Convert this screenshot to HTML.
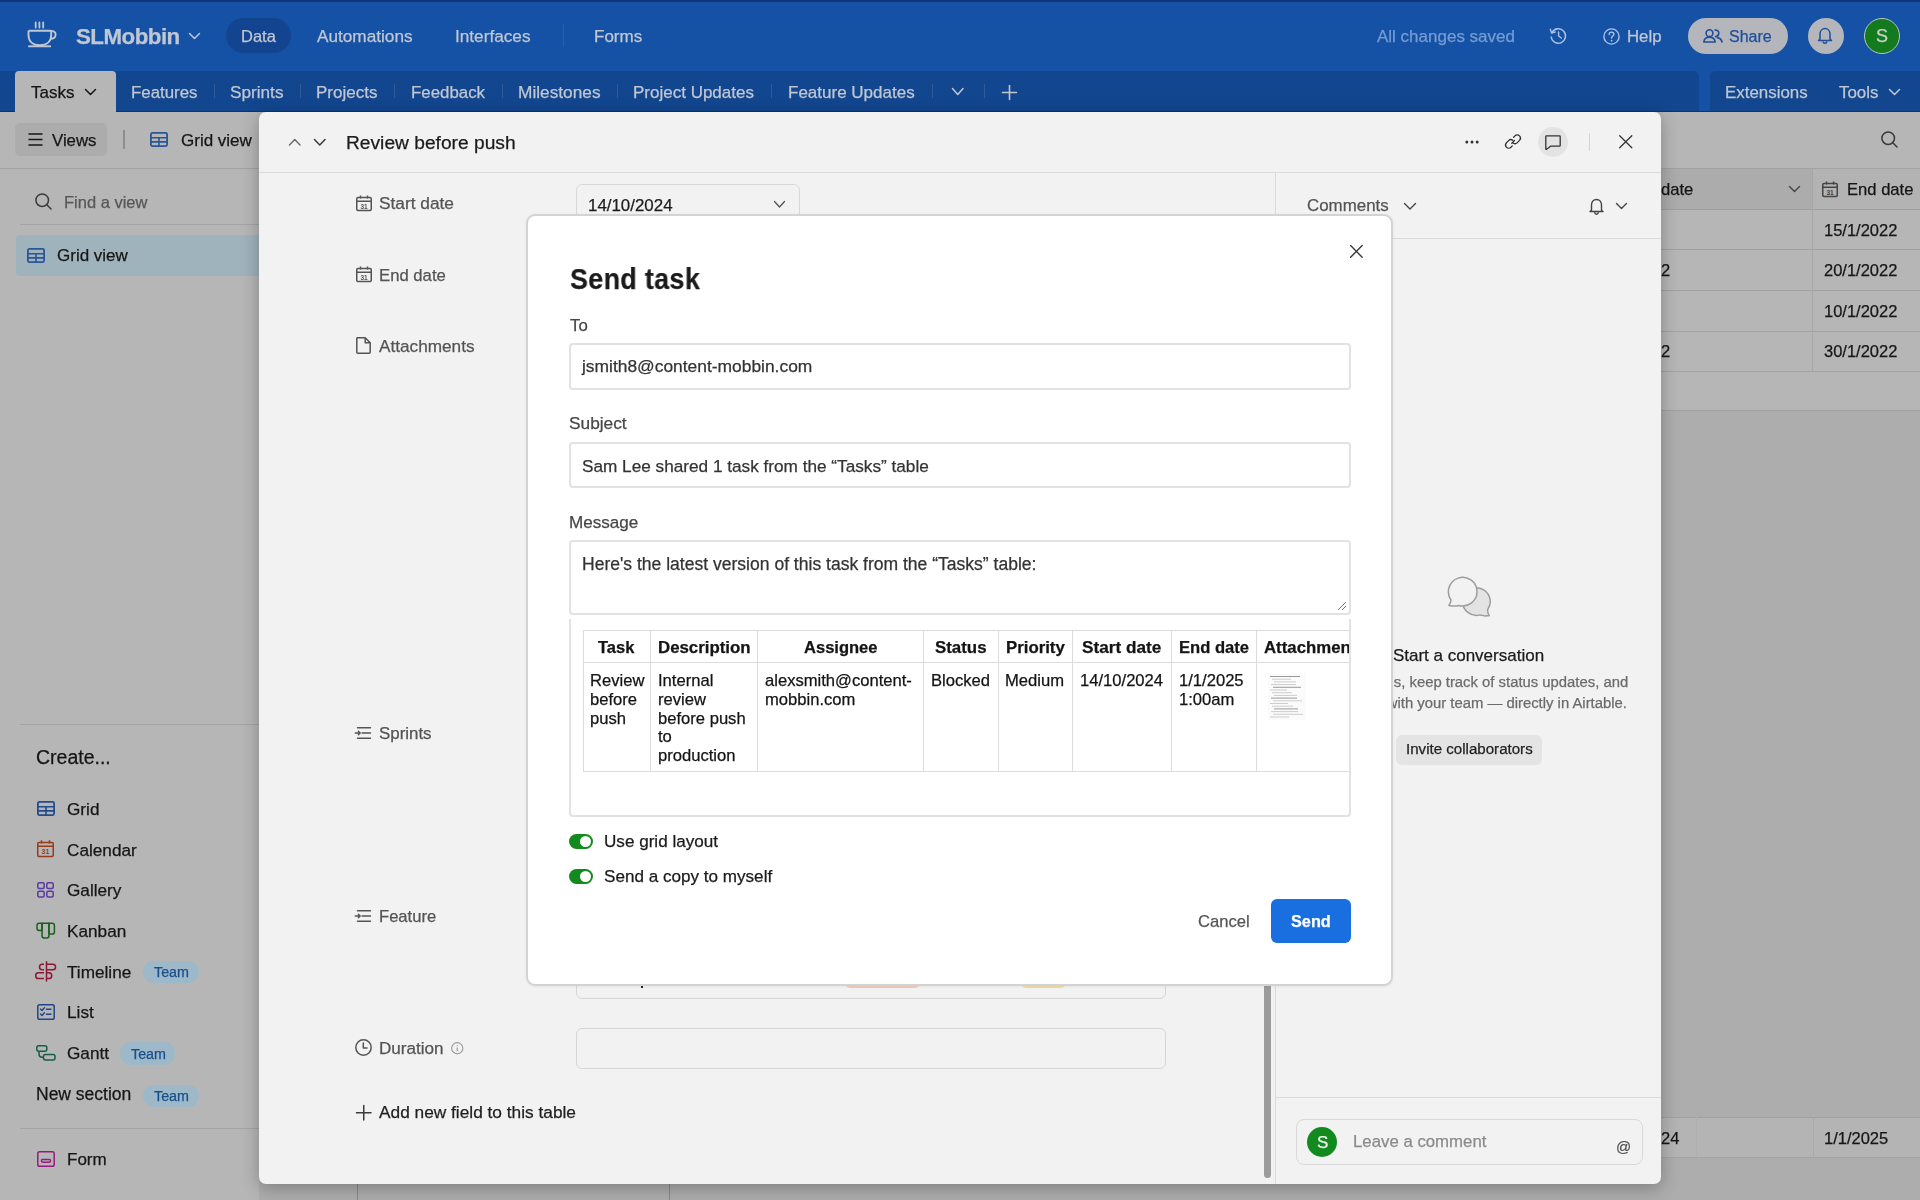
<!DOCTYPE html>
<html><head><meta charset="utf-8"><title>Send task</title>
<style>
html,body{margin:0;padding:0;width:1920px;height:1200px;overflow:hidden;position:relative;font-family:"Liberation Sans", sans-serif;background:#b6b6b6}
.t{position:absolute;white-space:nowrap;font-family:"Liberation Sans", sans-serif;-webkit-text-stroke:0.25px currentColor;will-change:transform}
svg{overflow:visible}
</style></head><body>
<div style="position:absolute;left:0px;top:0px;width:1920px;height:112px;background:#1552a6"></div>
<div style="position:absolute;left:0px;top:0px;width:1920px;height:2px;background:#0f357a"></div>
<svg style="position:absolute;left:22px;top:15px;" width="40" height="40" viewBox="0 0 40 40" fill="none"><path d="M6.5 15.7 H29.2 M6.5 15.7 V20 C6.5 26.5 11 30.3 17.8 30.3 C24.6 30.3 29.2 26.5 29.2 20 V15.7" stroke="#c0c7d3" stroke-width="1.9" stroke-linejoin="round"/><path d="M28.8 15.9 C32.6 15.9 33.6 17.5 33.6 19.6 C33.6 22 31.8 23.9 28 24" stroke="#c0c7d3" stroke-width="1.9"/><path d="M6.2 31.3 H29" stroke="#c0c7d3" stroke-width="1.9"/><path d="M13.7 7.4 V12.5 M17.4 7.4 V12.5 M21.2 7.4 V12.5" stroke="#c0c7d3" stroke-width="1.8" stroke-linecap="round"/></svg>
<div class="t" style="left:76.00px;top:22.70px;font-size:22.3px;line-height:28px;font-weight:700;color:#c0c7d3;letter-spacing:-0.5px">SLMobbin</div>
<svg style="position:absolute;left:189px;top:33px;" width="11" height="6" viewBox="0 0 11 6" fill="none"><path d="M0.5 0.5 L5.5 5.5 L10.5 0.5" stroke="#c0c7d3" stroke-width="1.5" stroke-linecap="round" stroke-linejoin="round"/></svg>
<div style="position:absolute;left:226px;top:18px;width:65px;height:35px;background:#13448f;border-radius:18px"></div>
<div class="t" style="left:241.00px;top:25.70px;font-size:16.5px;line-height:21px;font-weight:400;color:#c0c7d3;">Data</div>
<div class="t" style="left:317.00px;top:24.70px;font-size:17.2px;line-height:22px;font-weight:400;color:#c0c7d3;">Automations</div>
<div class="t" style="left:454.60px;top:24.70px;font-size:17.2px;line-height:22px;font-weight:400;color:#c0c7d3;">Interfaces</div>
<div style="position:absolute;left:563px;top:24px;width:1px;height:23px;background:#2d5ea6"></div>
<div class="t" style="left:594.00px;top:25.70px;font-size:17px;line-height:21px;font-weight:400;color:#c0c7d3;">Forms</div>
<div class="t" style="left:1376.60px;top:25.70px;font-size:17px;line-height:21px;font-weight:400;color:#769cd3;">All changes saved</div>
<svg style="position:absolute;left:1549px;top:27px;" width="18" height="17" viewBox="0 0 18 17" fill="none"><path d="M3.2 5.2 A7.2 7.2 0 1 1 2.2 10" stroke="#adc3e6" stroke-width="1.4" stroke-linecap="round"/><path d="M1.3 2.3 L2.6 6 L6.2 5" stroke="#adc3e6" stroke-width="1.4" stroke-linecap="round" stroke-linejoin="round"/><path d="M9.6 5 V9 L12.3 11" stroke="#adc3e6" stroke-width="1.4" stroke-linecap="round" stroke-linejoin="round"/></svg>
<svg style="position:absolute;left:1603px;top:28px;" width="17" height="17" viewBox="0 0 17 17" fill="none"><circle cx="8.5" cy="8.5" r="7.6" stroke="#adc3e6" stroke-width="1.4"/><path d="M6.2 6.5 C6.2 4.8 7.3 4.1 8.5 4.1 C9.8 4.1 10.9 5 10.9 6.3 C10.9 7.9 8.6 8.2 8.6 10" stroke="#adc3e6" stroke-width="1.4" stroke-linecap="round"/><circle cx="8.6" cy="12.7" r="0.9" fill="#adc3e6"/></svg>
<div class="t" style="left:1627.00px;top:25.70px;font-size:16.8px;line-height:21px;font-weight:400;color:#c0c7d3;">Help</div>
<div style="position:absolute;left:1687.5px;top:17.5px;width:100.5px;height:36px;background:#b4b6bb;border-radius:18px"></div>
<svg style="position:absolute;left:1703px;top:29px;" width="20" height="14" viewBox="0 0 20 14" fill="none"><circle cx="6.5" cy="4.2" r="3.4" stroke="#1f4e98" stroke-width="1.6"/><path d="M0.8 13 C1.2 9.8 3.5 8.3 6.5 8.3 C9.5 8.3 11.8 9.8 12.2 13 Z" stroke="#1f4e98" stroke-width="1.6" stroke-linejoin="round"/><path d="M12 1 C14.5 1 15.8 2.6 15.8 4.3 C15.8 6 14.6 7.4 12.6 7.6 M14.5 8.6 C17 9.2 18.6 10.6 19 13" stroke="#1f4e98" stroke-width="1.6" stroke-linecap="round"/></svg>
<div class="t" style="left:1729.00px;top:26.70px;font-size:16px;line-height:20px;font-weight:400;color:#1d4f9c;">Share</div>
<div style="position:absolute;left:1807.5px;top:17.5px;width:36px;height:36px;background:#b4b6bb;border-radius:50%"></div>
<svg style="position:absolute;left:1817px;top:27px;" width="16" height="17" viewBox="0 0 16 17" fill="none"><path d="M3 12 V7.2 C3 4 5.2 1.6 8 1.6 C10.8 1.6 13 4 13 7.2 V12 L14.5 13.5 H1.5 Z" stroke="#1f4e98" stroke-width="1.5" stroke-linejoin="round"/><path d="M6 14.5 C6.3 15.7 7 16.3 8 16.3 C9 16.3 9.7 15.7 10 14.5" stroke="#1f4e98" stroke-width="1.5"/></svg>
<div style="position:absolute;left:1864px;top:17.5px;width:36px;height:36px;background:#137a1e;border-radius:50%;box-sizing:border-box;border:1.5px solid #b8c4b8"></div>
<div class="t" style="left:1875.50px;top:24.80px;font-size:18px;line-height:22px;font-weight:400;color:#c9d3c9;">S</div>
<div style="position:absolute;left:0px;top:71px;width:1699px;height:41px;background:#12468f;border-top-right-radius:6px"></div>
<div style="position:absolute;left:1710px;top:71px;width:210px;height:41px;background:#12468f;border-top-left-radius:5px"></div>
<div style="position:absolute;left:0px;top:110.5px;width:1920px;height:1.5px;background:#0c3478"></div>
<div style="position:absolute;left:15px;top:71px;width:101px;height:41px;background:#b6b6b6;border-radius:4px 4px 0 0"></div>
<div class="t" style="left:31.30px;top:81.50px;font-size:17px;line-height:21px;font-weight:400;color:#161616;">Tasks</div>
<svg style="position:absolute;left:85px;top:88.5px;" width="11" height="6" viewBox="0 0 11 6" fill="none"><path d="M0.5 0.5 L5.5 5.5 L10.5 0.5" stroke="#161616" stroke-width="1.5" stroke-linecap="round" stroke-linejoin="round"/></svg>
<div class="t" style="left:131.00px;top:81.50px;font-size:16.85px;line-height:21px;font-weight:400;color:#c0c7d3;">Features</div>
<div class="t" style="left:230.00px;top:80.50px;font-size:17.2px;line-height:22px;font-weight:400;color:#c0c7d3;">Sprints</div>
<div class="t" style="left:316.40px;top:81.50px;font-size:17px;line-height:21px;font-weight:400;color:#c0c7d3;">Projects</div>
<div class="t" style="left:410.70px;top:81.50px;font-size:16.85px;line-height:21px;font-weight:400;color:#c0c7d3;">Feedback</div>
<div class="t" style="left:517.70px;top:80.50px;font-size:17.27px;line-height:22px;font-weight:400;color:#c0c7d3;">Milestones</div>
<div class="t" style="left:633.00px;top:81.50px;font-size:17px;line-height:21px;font-weight:400;color:#c0c7d3;">Project Updates</div>
<div class="t" style="left:787.80px;top:81.50px;font-size:17px;line-height:21px;font-weight:400;color:#c0c7d3;">Feature Updates</div>
<div style="position:absolute;left:214px;top:84px;width:1px;height:14px;background:#2f5a9c"></div>
<div style="position:absolute;left:299.6px;top:84px;width:1px;height:14px;background:#2f5a9c"></div>
<div style="position:absolute;left:394.4px;top:84px;width:1px;height:14px;background:#2f5a9c"></div>
<div style="position:absolute;left:502px;top:84px;width:1px;height:14px;background:#2f5a9c"></div>
<div style="position:absolute;left:616.6px;top:84px;width:1px;height:14px;background:#2f5a9c"></div>
<div style="position:absolute;left:771.4px;top:84px;width:1px;height:14px;background:#2f5a9c"></div>
<div style="position:absolute;left:931.8px;top:84px;width:1px;height:14px;background:#2f5a9c"></div>
<div style="position:absolute;left:983.6px;top:84px;width:1px;height:14px;background:#2f5a9c"></div>
<svg style="position:absolute;left:952px;top:88px;" width="11.5" height="7" viewBox="0 0 11.5 7" fill="none"><path d="M0.5 0.5 L5.75 6.5 L11.0 0.5" stroke="#c0c7d3" stroke-width="1.5" stroke-linecap="round" stroke-linejoin="round"/></svg>
<svg style="position:absolute;left:1002px;top:85px;" width="15" height="15" viewBox="0 0 15 15" fill="none"><path d="M7.5 0.5 V14.5 M0.5 7.5 H14.5" stroke="#c0c7d3" stroke-width="1.6" stroke-linecap="round"/></svg>
<div class="t" style="left:1725.00px;top:81.50px;font-size:16.9px;line-height:21px;font-weight:400;color:#c0c7d3;">Extensions</div>
<div class="t" style="left:1839.00px;top:81.50px;font-size:16.9px;line-height:21px;font-weight:400;color:#c0c7d3;">Tools</div>
<svg style="position:absolute;left:1889px;top:88.5px;" width="11" height="6" viewBox="0 0 11 6" fill="none"><path d="M0.5 0.5 L5.5 5.5 L10.5 0.5" stroke="#c0c7d3" stroke-width="1.5" stroke-linecap="round" stroke-linejoin="round"/></svg>
<div style="position:absolute;left:0px;top:112px;width:1920px;height:57px;background:#b6b6b6"></div>
<div style="position:absolute;left:0px;top:168px;width:1920px;height:1px;background:#a2a2a2"></div>
<div style="position:absolute;left:15px;top:123px;width:92px;height:33px;background:#acacac;border-radius:5px"></div>
<svg style="position:absolute;left:28px;top:133px;" width="15" height="13" viewBox="0 0 15 13" fill="none"><path d="M0.5 1 H14.5 M0.5 6.5 H14.5 M0.5 12 H14.5" stroke="#161616" stroke-width="1.6"/></svg>
<div class="t" style="left:51.70px;top:130.00px;font-size:16.8px;line-height:21px;font-weight:400;color:#161616;">Views</div>
<div style="position:absolute;left:123px;top:130px;width:1.5px;height:19px;background:#8e8e8e"></div>
<svg style="position:absolute;left:150px;top:132px;" width="18" height="15" viewBox="0 0 18 15" fill="none"><rect x="0.9" y="0.9" width="16.2" height="13.2" rx="1.5" stroke="#2a5599" stroke-width="1.8"/><path d="M0.9 5.7 H17.1 M0.9 9.9 H17.1 M9.0 5.7 V14.1" stroke="#2a5599" stroke-width="1.6"/></svg>
<div class="t" style="left:180.50px;top:130.00px;font-size:17px;line-height:21px;font-weight:400;color:#161616;">Grid view</div>
<svg style="position:absolute;left:1881px;top:131px;" width="17" height="17" viewBox="0 0 17 17" fill="none"><circle cx="7.2" cy="7.2" r="6.3" stroke="#3a3a3a" stroke-width="1.5"/><path d="M11.8 11.8 L16 16" stroke="#3a3a3a" stroke-width="1.5" stroke-linecap="round"/></svg>
<div style="position:absolute;left:0px;top:169px;width:259px;height:1031px;background:#b6b6b6"></div>
<svg style="position:absolute;left:35px;top:193px;" width="17" height="17" viewBox="0 0 17 17" fill="none"><circle cx="7.2" cy="7.2" r="6.3" stroke="#3c3c3c" stroke-width="1.5"/><path d="M11.8 11.8 L16 16" stroke="#3c3c3c" stroke-width="1.5" stroke-linecap="round"/></svg>
<div class="t" style="left:64.30px;top:191.70px;font-size:16.5px;line-height:21px;font-weight:400;color:#575757;">Find a view</div>
<div style="position:absolute;left:20px;top:224px;width:280px;height:1px;background:#a4a4a4"></div>
<div style="position:absolute;left:16px;top:235px;width:284px;height:41px;background:#9fb3bc;border-radius:4px"></div>
<svg style="position:absolute;left:26.5px;top:247.5px;" width="18" height="15" viewBox="0 0 18 15" fill="none"><rect x="0.9" y="0.9" width="16.2" height="13.2" rx="1.5" stroke="#2a5599" stroke-width="1.8"/><path d="M0.9 5.7 H17.1 M0.9 9.9 H17.1 M9.0 5.7 V14.1" stroke="#2a5599" stroke-width="1.6"/></svg>
<div class="t" style="left:56.60px;top:245.40px;font-size:17px;line-height:21px;font-weight:400;color:#161616;">Grid view</div>
<div style="position:absolute;left:20px;top:724px;width:280px;height:1px;background:#a4a4a4"></div>
<div class="t" style="left:35.75px;top:744.50px;font-size:19.5px;line-height:24px;font-weight:400;color:#161616;">Create...</div>
<div class="t" style="left:66.50px;top:798.00px;font-size:17.2px;line-height:22px;font-weight:400;color:#161616;">Grid</div>
<div class="t" style="left:66.50px;top:839.30px;font-size:17.2px;line-height:22px;font-weight:400;color:#161616;">Calendar</div>
<div class="t" style="left:66.50px;top:879.40px;font-size:17.2px;line-height:22px;font-weight:400;color:#161616;">Gallery</div>
<div class="t" style="left:66.50px;top:920.00px;font-size:17.2px;line-height:22px;font-weight:400;color:#161616;">Kanban</div>
<div class="t" style="left:66.50px;top:960.90px;font-size:17.2px;line-height:22px;font-weight:400;color:#161616;">Timeline</div>
<div class="t" style="left:66.50px;top:1001.00px;font-size:17.2px;line-height:22px;font-weight:400;color:#161616;">List</div>
<div class="t" style="left:66.50px;top:1041.70px;font-size:17.2px;line-height:22px;font-weight:400;color:#161616;">Gantt</div>
<svg style="position:absolute;left:36.5px;top:801px;" width="18" height="15" viewBox="0 0 18 15" fill="none"><rect x="0.9" y="0.9" width="16.2" height="13.2" rx="1.5" stroke="#224c8c" stroke-width="1.8"/><path d="M0.9 5.7 H17.1 M0.9 9.9 H17.1 M9.0 5.7 V14.1" stroke="#224c8c" stroke-width="1.6"/></svg>
<svg style="position:absolute;left:37px;top:840px;" width="17" height="17" viewBox="0 0 17 17" fill="none"><rect x="0.75" y="2.5" width="15.5" height="14" rx="1.2" stroke="#963c17" stroke-width="1.5"/><path d="M0.75 6.3 H16.25 M4.5 0.3 V3.5 M12.5 0.3 V3.5" stroke="#963c17" stroke-width="1.5"/><text x="8.5" y="14.3" font-size="7" font-family="Liberation Sans" font-weight="700" text-anchor="middle" fill="#963c17">31</text></svg>
<svg style="position:absolute;left:37px;top:882px;" width="17" height="16" viewBox="0 0 17 16" fill="none"><rect x="0.8" y="0.8" width="6.4" height="5.8" rx="1.5" stroke="#5a3a9e" stroke-width="1.5"/><rect x="9.8" y="0.8" width="6.4" height="5.8" rx="1.5" stroke="#5a3a9e" stroke-width="1.5"/><rect x="0.8" y="9.2" width="6.4" height="5.8" rx="1.5" stroke="#5a3a9e" stroke-width="1.5"/><rect x="9.8" y="9.2" width="6.4" height="5.8" rx="1.5" stroke="#5a3a9e" stroke-width="1.5"/></svg>
<svg style="position:absolute;left:32px;top:918px;" width="28" height="28" viewBox="0 0 28 28" fill="none"><path d="M10 5.3 H7.2 C5.9 5.3 5 6.2 5 7.5 V10.3 C5 11.6 5.9 12.4 7.2 12.4 H10 Z" stroke="#17601d" stroke-width="1.5" stroke-linejoin="round"/><path d="M10 5.3 H17 V17.8 C17 19.1 16.1 20 14.8 20 H12.2 C10.9 20 10 19.1 10 17.8 Z" stroke="#17601d" stroke-width="1.5" stroke-linejoin="round"/><path d="M17 5.3 H20.2 C21.5 5.3 22.4 6.2 22.4 7.5 V13.9 C22.4 15.2 21.5 16.1 20.2 16.1 H17 Z" stroke="#17601d" stroke-width="1.5" stroke-linejoin="round"/></svg>
<svg style="position:absolute;left:32px;top:958px;" width="28" height="28" viewBox="0 0 28 28" fill="none"><path d="M14.5 3.7 V22.9" stroke="#8e1638" stroke-width="1.5" stroke-linecap="round"/><path d="M14.5 6.2 H20.9 C22.4 6.2 23.6 7.4 23.6 8.95 C23.6 10.5 22.4 11.7 20.9 11.7 H14.5 M12 6.2 H10.2 C8.7 6.2 7.5 7.4 7.5 8.95 C7.5 10.5 8.7 11.7 10.2 11.7 H12" stroke="#8e1638" stroke-width="1.5"/><path d="M14.5 14.8 H17 C18.5 14.8 19.7 16 19.7 17.65 C19.7 19.3 18.5 20.5 17 20.5 H14.5 M12 14.8 H6.4 C4.9 14.8 3.7 16 3.7 17.65 C3.7 19.3 4.9 20.5 6.4 20.5 H12" stroke="#8e1638" stroke-width="1.5"/></svg>
<svg style="position:absolute;left:36.5px;top:1004px;" width="18" height="16" viewBox="0 0 18 16" fill="none"><rect x="0.8" y="0.8" width="16.4" height="14.4" rx="1.8" stroke="#224587" stroke-width="1.5"/><path d="M3.5 5 L5 6.5 L7.5 3.8 M3.5 10 L5 11.5 L7.5 8.8 M9.5 5.3 H14 M9.5 10.3 H14" stroke="#224587" stroke-width="1.4" stroke-linecap="round" stroke-linejoin="round"/></svg>
<svg style="position:absolute;left:35.5px;top:1045px;" width="20" height="16" viewBox="0 0 20 16" fill="none"><rect x="0.8" y="0.8" width="10" height="5.5" rx="2" stroke="#165e45" stroke-width="1.5"/><rect x="7.5" y="9.5" width="11.5" height="5.5" rx="2" stroke="#165e45" stroke-width="1.5"/><path d="M3 6.3 V9 C3 11 4 12.2 6 12.2 H7.5" stroke="#165e45" stroke-width="1.5"/></svg>
<div style="position:absolute;left:143px;top:961px;width:56px;height:22.3px;background:#9db8c9;border-radius:11px"></div>
<div class="t" style="left:153.80px;top:963.30px;font-size:14.3px;line-height:18px;font-weight:400;color:#194f8a;">Team</div>
<div style="position:absolute;left:120.3px;top:1042.3px;width:55.2px;height:22.3px;background:#9db8c9;border-radius:11px"></div>
<div class="t" style="left:131.10px;top:1044.60px;font-size:14.3px;line-height:18px;font-weight:400;color:#194f8a;">Team</div>
<div class="t" style="left:36.40px;top:1083.00px;font-size:17.5px;line-height:22px;font-weight:400;color:#161616;">New section</div>
<div style="position:absolute;left:143px;top:1084.7px;width:56px;height:22.3px;background:#9db8c9;border-radius:11px"></div>
<div class="t" style="left:153.80px;top:1087.00px;font-size:14.3px;line-height:18px;font-weight:400;color:#194f8a;">Team</div>
<div style="position:absolute;left:20px;top:1128px;width:280px;height:1px;background:#a4a4a4"></div>
<svg style="position:absolute;left:36.5px;top:1151px;" width="18" height="16" viewBox="0 0 18 16" fill="none"><rect x="0.8" y="0.8" width="16.4" height="14.4" rx="1.8" stroke="#961b80" stroke-width="1.5"/><path d="M4.5 8.5 V9.5 C4.5 10.6 5.2 11.3 6.3 11.3 H12.2 C13.2 11.3 13.6 10.6 13.6 9.8 C13.6 9 13.2 8.5 12.2 8.5 H4.5" stroke="#961b80" stroke-width="1.4"/></svg>
<div class="t" style="left:66.50px;top:1149.40px;font-size:17px;line-height:21px;font-weight:400;color:#161616;">Form</div>
<div style="position:absolute;left:259px;top:169px;width:1661px;height:1031px;background:#adadad"></div>
<div style="position:absolute;left:300px;top:169px;width:1620px;height:40px;background:#b3b3b3"></div>
<div style="position:absolute;left:1661px;top:169px;width:151px;height:40px;background:#acacac"></div>
<div style="position:absolute;left:300px;top:208.5px;width:1620px;height:1px;background:#9e9e9e"></div>
<div style="position:absolute;left:300px;top:209.5px;width:1620px;height:200.5px;background:#b6b6b6"></div>
<div style="position:absolute;left:300px;top:249px;width:1620px;height:1px;background:#a1a1a1"></div>
<div style="position:absolute;left:300px;top:290px;width:1620px;height:1px;background:#a1a1a1"></div>
<div style="position:absolute;left:300px;top:331px;width:1620px;height:1px;background:#a1a1a1"></div>
<div style="position:absolute;left:300px;top:371px;width:1620px;height:1px;background:#a1a1a1"></div>
<div style="position:absolute;left:300px;top:410px;width:1620px;height:1px;background:#a1a1a1"></div>
<div style="position:absolute;left:1812px;top:169px;width:1px;height:202px;background:#a6a6a6"></div>
<div class="t" style="left:1661.00px;top:178.50px;font-size:16.6px;line-height:21px;font-weight:400;color:#161616;clip-path:inset(0 0 0 0)">date</div>
<svg style="position:absolute;left:1789px;top:186px;" width="11" height="6" viewBox="0 0 11 6" fill="none"><path d="M0.5 0.5 L5.5 5.5 L10.5 0.5" stroke="#4a4a4a" stroke-width="1.5" stroke-linecap="round" stroke-linejoin="round"/></svg>
<svg style="position:absolute;left:1822px;top:181px;" width="16" height="16" viewBox="0 0 16 16" fill="none"><rect x="0.75" y="2.5" width="14.5" height="13" rx="1.2" stroke="#444" stroke-width="1.5"/><path d="M0.75 6.2 H15.25 M4.5 0.5 V3.5 M11.5 0.5 V3.5" stroke="#444" stroke-width="1.5"/><text x="8" y="13.6" font-size="6.5" font-family="Liberation Sans" font-weight="700" text-anchor="middle" fill="#444">31</text></svg>
<div class="t" style="left:1847.00px;top:178.50px;font-size:16.6px;line-height:21px;font-weight:400;color:#161616;">End date</div>
<div class="t" style="left:1824.00px;top:219.60px;font-size:16.5px;line-height:21px;font-weight:400;color:#161616;">15/1/2022</div>
<div class="t" style="left:1824.00px;top:260.20px;font-size:16.5px;line-height:21px;font-weight:400;color:#161616;">20/1/2022</div>
<div class="t" style="left:1824.00px;top:300.80px;font-size:16.5px;line-height:21px;font-weight:400;color:#161616;">10/1/2022</div>
<div class="t" style="left:1824.00px;top:341.40px;font-size:16.5px;line-height:21px;font-weight:400;color:#161616;">30/1/2022</div>
<div class="t" style="left:1661.00px;top:260.20px;font-size:16.5px;line-height:21px;font-weight:400;color:#161616;">2</div>
<div class="t" style="left:1661.00px;top:341.40px;font-size:16.5px;line-height:21px;font-weight:400;color:#161616;">2</div>
<div style="position:absolute;left:300px;top:1117px;width:1620px;height:40px;background:#b4b4b4"></div>
<div style="position:absolute;left:300px;top:1117px;width:1620px;height:1px;background:#9f9f9f"></div>
<div style="position:absolute;left:300px;top:1157px;width:1620px;height:1px;background:#a3a3a3"></div>
<div style="position:absolute;left:1813px;top:1117px;width:1px;height:40px;background:#a9a9a9"></div>
<div style="position:absolute;left:1695.5px;top:1117px;width:1px;height:40px;background:#b0b0b0"></div>
<div class="t" style="left:1661.00px;top:1128.20px;font-size:16.5px;line-height:21px;font-weight:400;color:#161616;">24</div>
<div class="t" style="left:1824.00px;top:1128.20px;font-size:16.5px;line-height:21px;font-weight:400;color:#161616;">1/1/2025</div>
<div style="position:absolute;left:357px;top:1184px;width:1px;height:16px;background:#8a8a8a"></div>
<div style="position:absolute;left:669px;top:1184px;width:1px;height:16px;background:#8a8a8a"></div>
<div style="position:absolute;left:259px;top:112px;width:1402px;height:1072px;background:#f2f2f2;border-radius:7px;box-shadow:0 4px 18px rgba(0,0,0,0.28)"></div>
<svg style="position:absolute;left:289px;top:138.5px;" width="11.5" height="6.5" viewBox="0 0 11.5 6.5" fill="none"><path d="M0.5 6.0 L5.75 0.5 L11.0 6.0" stroke="#6a6a6a" stroke-width="1.4" stroke-linecap="round" stroke-linejoin="round"/></svg>
<svg style="position:absolute;left:314px;top:138.5px;" width="11.5" height="6.5" viewBox="0 0 11.5 6.5" fill="none"><path d="M0.5 0.5 L5.75 6.0 L11.0 0.5" stroke="#3a3a3a" stroke-width="1.5" stroke-linecap="round" stroke-linejoin="round"/></svg>
<div class="t" style="left:346.00px;top:130.50px;font-size:19.2px;line-height:24px;font-weight:400;color:#1b1b1b;">Review before push</div>
<svg style="position:absolute;left:1465px;top:139.5px;" width="14" height="4" viewBox="0 0 14 4" fill="none"><circle cx="1.8" cy="2" r="1.5" fill="#333"/><circle cx="7" cy="2" r="1.5" fill="#333"/><circle cx="12.2" cy="2" r="1.5" fill="#333"/></svg>
<svg style="position:absolute;left:1504.5px;top:134px;" width="16" height="15" viewBox="0 0 16 15" fill="none"><path d="M6.8 9.2 L9.5 6.5" stroke="#333" stroke-width="1.3" stroke-linecap="round"/><path d="M8.6 3.2 L9.9 1.9 C11.2 0.6 13.3 0.6 14.5 1.9 C15.7 3.1 15.7 5.1 14.5 6.4 L12.3 8.6 C11.1 9.8 9.3 9.9 8.1 8.9" stroke="#333" stroke-width="1.3" stroke-linecap="round"/><path d="M7.8 6.3 C6.6 5.3 4.8 5.4 3.6 6.6 L1.5 8.7 C0.3 10 0.3 12 1.5 13.2 C2.7 14.4 4.8 14.4 6 13.2 L7.3 11.9" stroke="#333" stroke-width="1.3" stroke-linecap="round"/></svg>
<div style="position:absolute;left:1538px;top:127px;width:30px;height:30px;background:#e3e3e3;border-radius:50%"></div>
<svg style="position:absolute;left:1545px;top:135px;" width="16" height="15" viewBox="0 0 16 15" fill="none"><path d="M1.5 0.8 H14.5 C15 0.8 15.2 1 15.2 1.5 V10.5 C15.2 11 15 11.2 14.5 11.2 H5.5 L1.6 14.3 C1.2 14.6 0.8 14.4 0.8 13.9 V1.5 C0.8 1 1 0.8 1.5 0.8 Z" stroke="#333" stroke-width="1.3" stroke-linejoin="round"/></svg>
<div style="position:absolute;left:1588.5px;top:132.5px;width:1px;height:18px;background:#d5d5d5"></div>
<svg style="position:absolute;left:1619px;top:135px;" width="13.5" height="13.5" viewBox="0 0 13.5 13.5" fill="none"><path d="M0.7 0.7 L12.8 12.8 M12.8 0.7 L0.7 12.8" stroke="#333" stroke-width="1.3" stroke-linecap="round"/></svg>
<div style="position:absolute;left:259px;top:171.5px;width:1402px;height:1.5px;background:#dadada"></div>
<div style="position:absolute;left:1275px;top:173px;width:1.2px;height:1011px;background:#dadada"></div>
<svg style="position:absolute;left:355.5px;top:195px;" width="16" height="16" viewBox="0 0 16 16" fill="none"><rect x="0.75" y="2.5" width="14.5" height="13" rx="1.2" stroke="#545454" stroke-width="1.5"/><path d="M0.75 6.2 H15.25 M4.5 0.5 V3.5 M11.5 0.5 V3.5" stroke="#545454" stroke-width="1.5"/><text x="8" y="13.6" font-size="6.5" font-family="Liberation Sans" font-weight="700" text-anchor="middle" fill="#545454">31</text></svg>
<div class="t" style="left:379.00px;top:192.30px;font-size:17.3px;line-height:22px;font-weight:400;color:#545454;">Start date</div>
<div style="position:absolute;left:576px;top:183.75px;width:224px;height:60px;box-sizing:border-box;border:1.5px solid #d8d8d8;border-radius:6px;background:#f2f2f2"></div>
<div class="t" style="left:587.50px;top:194.75px;font-size:16.9px;line-height:21px;font-weight:400;color:#1d1d1d;">14/10/2024</div>
<svg style="position:absolute;left:774px;top:201px;" width="11" height="6.5" viewBox="0 0 11 6.5" fill="none"><path d="M0.5 0.5 L5.5 6.0 L10.5 0.5" stroke="#555" stroke-width="1.3" stroke-linecap="round" stroke-linejoin="round"/></svg>
<svg style="position:absolute;left:355.5px;top:266px;" width="16" height="16" viewBox="0 0 16 16" fill="none"><rect x="0.75" y="2.5" width="14.5" height="13" rx="1.2" stroke="#545454" stroke-width="1.5"/><path d="M0.75 6.2 H15.25 M4.5 0.5 V3.5 M11.5 0.5 V3.5" stroke="#545454" stroke-width="1.5"/><text x="8" y="13.6" font-size="6.5" font-family="Liberation Sans" font-weight="700" text-anchor="middle" fill="#545454">31</text></svg>
<div class="t" style="left:379.00px;top:264.50px;font-size:16.7px;line-height:21px;font-weight:400;color:#545454;">End date</div>
<svg style="position:absolute;left:356px;top:337px;" width="15" height="17" viewBox="0 0 15 17" fill="none"><path d="M1.5 0.8 H9.2 L14.2 5.8 V15.2 C14.2 15.8 13.8 16.2 13.2 16.2 H1.8 C1.2 16.2 0.8 15.8 0.8 15.2 V1.5 C0.8 1.1 1.1 0.8 1.5 0.8 Z M9.2 0.8 V5.8 H14.2" stroke="#545454" stroke-width="1.5" stroke-linejoin="round"/></svg>
<div class="t" style="left:379.40px;top:334.60px;font-size:17.2px;line-height:22px;font-weight:400;color:#545454;">Attachments</div>
<svg style="position:absolute;left:355px;top:727px;" width="16" height="12" viewBox="0 0 16 12" fill="none"><path d="M2.5 0.8 H15.5 M7 6 H15.5 M2.5 11.2 H15.5 M0.3 6 H5.2 M3.4 4.2 L5.2 6 L3.4 7.8" stroke="#545454" stroke-width="1.4" stroke-linecap="round" stroke-linejoin="round"/></svg>
<div class="t" style="left:379.40px;top:723.00px;font-size:16.9px;line-height:21px;font-weight:400;color:#545454;">Sprints</div>
<svg style="position:absolute;left:355px;top:910px;" width="16" height="12" viewBox="0 0 16 12" fill="none"><path d="M2.5 0.8 H15.5 M7 6 H15.5 M2.5 11.2 H15.5 M0.3 6 H5.2 M3.4 4.2 L5.2 6 L3.4 7.8" stroke="#545454" stroke-width="1.4" stroke-linecap="round" stroke-linejoin="round"/></svg>
<div class="t" style="left:379.20px;top:906.10px;font-size:16.6px;line-height:21px;font-weight:400;color:#545454;">Feature</div>
<div style="position:absolute;left:576px;top:900px;width:590px;height:98.8px;box-sizing:border-box;border:1.5px solid #d6d6d6;border-radius:6px;background:#f2f2f2"></div>
<div style="position:absolute;left:844px;top:975px;width:77px;height:13px;background:#f0cdb8;border-radius:7px"></div>
<div style="position:absolute;left:1020px;top:975px;width:47px;height:13px;background:#f1dba0;border-radius:7px"></div>
<div style="position:absolute;left:641px;top:985px;width:1.5px;height:3px;background:#222"></div>
<svg style="position:absolute;left:355px;top:1039px;" width="17" height="17" viewBox="0 0 17 17" fill="none"><circle cx="8.5" cy="8.5" r="7.7" stroke="#545454" stroke-width="1.5"/><path d="M8.3 4 V9 H12" stroke="#545454" stroke-width="1.5" stroke-linecap="round" stroke-linejoin="round"/></svg>
<div class="t" style="left:379.20px;top:1037.90px;font-size:17.1px;line-height:21px;font-weight:400;color:#545454;">Duration</div>
<svg style="position:absolute;left:451px;top:1042px;" width="12.5" height="12.5" viewBox="0 0 12.5 12.5" fill="none"><circle cx="6.25" cy="6.25" r="5.6" stroke="#9a9a9a" stroke-width="1.1"/><path d="M6.25 5.5 V9.3" stroke="#9a9a9a" stroke-width="1.2"/><circle cx="6.25" cy="3.6" r="0.7" fill="#9a9a9a"/></svg>
<div style="position:absolute;left:576px;top:1028px;width:590px;height:41.3px;box-sizing:border-box;border:1.5px solid #d6d6d6;border-radius:6px;background:#f2f2f2"></div>
<svg style="position:absolute;left:355.5px;top:1105px;" width="15.5" height="15.5" viewBox="0 0 15.5 15.5" fill="none"><path d="M7.75 0.5 V15 M0.5 7.75 H15" stroke="#3a3a3a" stroke-width="1.5" stroke-linecap="round"/></svg>
<div class="t" style="left:379.20px;top:1100.90px;font-size:17.3px;line-height:22px;font-weight:400;color:#1f1f1f;">Add new field to this table</div>
<div style="position:absolute;left:1263.5px;top:560px;width:7.5px;height:618px;background:#9b9b9b;border-radius:4px"></div>
<div class="t" style="left:1307.40px;top:195.40px;font-size:16.9px;line-height:21px;font-weight:400;color:#545454;">Comments</div>
<svg style="position:absolute;left:1404px;top:202.5px;" width="12" height="6.5" viewBox="0 0 12 6.5" fill="none"><path d="M0.5 0.5 L6.0 6.0 L11.5 0.5" stroke="#444" stroke-width="1.4" stroke-linecap="round" stroke-linejoin="round"/></svg>
<svg style="position:absolute;left:1589px;top:197.5px;" width="15" height="17" viewBox="0 0 15 17" fill="none"><path d="M2.5 12.2 V7 C2.5 3.8 4.6 1.5 7.5 1.5 C10.4 1.5 12.5 3.8 12.5 7 V12.2 L14 13.5 H1 Z" stroke="#444" stroke-width="1.4" stroke-linejoin="round"/><path d="M5.5 14.2 C5.8 15.6 6.5 16.3 7.5 16.3 C8.5 16.3 9.2 15.6 9.5 14.2" stroke="#444" stroke-width="1.4"/></svg>
<svg style="position:absolute;left:1616px;top:203px;" width="11" height="6" viewBox="0 0 11 6" fill="none"><path d="M0.5 0.5 L5.5 5.5 L10.5 0.5" stroke="#444" stroke-width="1.4" stroke-linecap="round" stroke-linejoin="round"/></svg>
<div style="position:absolute;left:1276px;top:238px;width:385px;height:1.2px;background:#dadada"></div>
<svg style="position:absolute;left:1440px;top:570px;" width="60" height="52" viewBox="0 0 60 52" fill="none"><path d="M47.7 39.5 A13.8 13.8 0 1 0 40 44.9 Q45 46.6 49.2 45.6 Q47.4 43 47.7 39.5 Z" fill="#e3e3e3" stroke="#9d9d9d" stroke-width="1.5" stroke-linejoin="round"/><path d="M11 29.9 A14.3 14.3 0 1 1 19 35.5 Q14 36.6 9 35.4 Q10.8 33 11 29.9 Z" fill="#f2f2f2" stroke="#9d9d9d" stroke-width="1.5" stroke-linejoin="round"/></svg>
<div class="t" style="left:1276px;width:385px;top:645px;text-align:center;font-size:17px;line-height:21px;color:#1b1b1b">Start a conversation</div>
<div class="t" style="left:1276px;width:385px;top:672px;text-align:center;font-size:14.85px;line-height:20.6px;color:#6b6b6b;white-space:normal">Ask questions, keep track of status updates, and<br>collaborate with your team &mdash; directly in Airtable.</div>
<div style="position:absolute;left:1395.5px;top:735px;width:146.5px;height:29.5px;background:#e4e4e4;border-radius:6px"></div>
<div class="t" style="left:1405.60px;top:739.30px;font-size:15.1px;line-height:19px;font-weight:400;color:#1f1f1f;">Invite collaborators</div>
<div style="position:absolute;left:1276px;top:1097.3px;width:385px;height:1.2px;background:#dadada"></div>
<div style="position:absolute;left:1296px;top:1118.5px;width:346.5px;height:46.5px;box-sizing:border-box;border:1.5px solid #d9d9d9;border-radius:8px;background:#f2f2f2"></div>
<div style="position:absolute;left:1307px;top:1126.7px;width:30px;height:30px;background:#138a1e;border-radius:50%"></div>
<div class="t" style="left:1316.60px;top:1131.50px;font-size:17px;line-height:21px;font-weight:400;color:#f2f2f2;">S</div>
<div class="t" style="left:1353.30px;top:1131.30px;font-size:16.8px;line-height:21px;font-weight:400;color:#8b8b8b;">Leave a comment</div>
<div class="t" style="left:1616.00px;top:1137.20px;font-size:15px;line-height:19px;font-weight:400;color:#555;">@</div>
<div style="position:absolute;left:526.3px;top:213.8px;width:866.7px;height:772.4px;box-sizing:border-box;background:#fff;border:2px solid #d3d3d3;border-radius:9px;box-shadow:0 1px 3px rgba(0,0,0,0.06)"></div>
<svg style="position:absolute;left:1350px;top:245px;" width="12.8" height="12.8" viewBox="0 0 12.8 12.8" fill="none"><path d="M0.6 0.6 L12.2 12.2 M12.2 0.6 L0.6 12.2" stroke="#3a3a3a" stroke-width="1.4" stroke-linecap="round"/></svg>
<div class="t" style="left:569.70px;top:260.20px;font-size:29.5px;line-height:37px;font-weight:700;color:#1b1b1b;transform:scaleX(0.91);transform-origin:0 0;letter-spacing:0.4px">Send task</div>
<div class="t" style="left:569.70px;top:314.80px;font-size:16.8px;line-height:21px;font-weight:400;color:#474747;">To</div>
<div style="position:absolute;left:569px;top:342.5px;width:782px;height:47.5px;box-sizing:border-box;border:2px solid #e2e2e2;border-radius:4px;background:#fff"></div>
<div class="t" style="left:581.70px;top:354.70px;font-size:17.4px;line-height:22px;font-weight:400;color:#333;">jsmith8@content-mobbin.com</div>
<div class="t" style="left:569.40px;top:412.20px;font-size:17.3px;line-height:22px;font-weight:400;color:#474747;">Subject</div>
<div style="position:absolute;left:569px;top:441.7px;width:782px;height:46.5px;box-sizing:border-box;border:2px solid #e2e2e2;border-radius:4px;background:#fff"></div>
<div class="t" style="left:581.90px;top:454.50px;font-size:17.2px;line-height:22px;font-weight:400;color:#333;">Sam Lee shared 1 task from the &ldquo;Tasks&rdquo; table</div>
<div class="t" style="left:569.40px;top:511.50px;font-size:17.1px;line-height:21px;font-weight:400;color:#474747;">Message</div>
<div style="position:absolute;left:569px;top:540px;width:782px;height:75px;box-sizing:border-box;border:2px solid #e2e2e2;border-radius:4px;background:#fff"></div>
<div class="t" style="left:581.90px;top:552.80px;font-size:17.55px;line-height:22px;font-weight:400;color:#333;">Here&#39;s the latest version of this task from the &ldquo;Tasks&rdquo; table:</div>
<svg style="position:absolute;left:1337px;top:601px;" width="10" height="10" viewBox="0 0 10 10" fill="none"><path d="M1 9 L9 1 M5 9 L9 5" stroke="#777" stroke-width="1"/></svg>
<div style="position:absolute;left:569px;top:619px;width:782px;height:198px;box-sizing:border-box;border:2px solid #e2e2e2;border-top:none;border-radius:0 0 4px 4px;background:#fff;overflow:hidden">
<div style="position:absolute;left:11.600000000000023px;top:10.700000000000045px;width:817.4px;height:141.89999999999998px;box-sizing:border-box;border:1px solid #dcdcdc"></div>
<div style="position:absolute;left:11.600000000000023px;top:43px;width:817.4px;height:1px;background:#dcdcdc"></div>
<div style="position:absolute;left:78.79999999999995px;top:10.700000000000045px;width:1px;height:141.89999999999998px;background:#dcdcdc"></div>
<div style="position:absolute;left:186.0px;top:10.700000000000045px;width:1px;height:141.89999999999998px;background:#dcdcdc"></div>
<div style="position:absolute;left:352.0px;top:10.700000000000045px;width:1px;height:141.89999999999998px;background:#dcdcdc"></div>
<div style="position:absolute;left:426.70000000000005px;top:10.700000000000045px;width:1px;height:141.89999999999998px;background:#dcdcdc"></div>
<div style="position:absolute;left:501.4000000000001px;top:10.700000000000045px;width:1px;height:141.89999999999998px;background:#dcdcdc"></div>
<div style="position:absolute;left:600.4000000000001px;top:10.700000000000045px;width:1px;height:141.89999999999998px;background:#dcdcdc"></div>
<div style="position:absolute;left:684.9000000000001px;top:10.700000000000045px;width:1px;height:141.89999999999998px;background:#dcdcdc"></div>
</div>
<div class="t" style="left:598.00px;top:636.80px;font-size:16.5px;line-height:21px;font-weight:700;color:#141414;">Task</div>
<div class="t" style="left:657.80px;top:636.80px;font-size:16.83px;line-height:21px;font-weight:700;color:#141414;">Description</div>
<div class="t" style="left:804.40px;top:636.80px;font-size:16.55px;line-height:21px;font-weight:700;color:#141414;">Assignee</div>
<div class="t" style="left:935.00px;top:636.80px;font-size:16.86px;line-height:21px;font-weight:700;color:#141414;">Status</div>
<div class="t" style="left:1005.80px;top:636.80px;font-size:16.81px;line-height:21px;font-weight:700;color:#141414;">Priority</div>
<div class="t" style="left:1082.00px;top:635.80px;font-size:17.2px;line-height:22px;font-weight:700;color:#141414;">Start date</div>
<div class="t" style="left:1179.00px;top:636.80px;font-size:16.6px;line-height:21px;font-weight:700;color:#141414;">End date</div>
<div class="t" style="left:1264.00px;top:636.80px;font-size:16.8px;line-height:21px;font-weight:700;color:#141414;width:85px;overflow:hidden">Attachments</div>
<div class="t" style="left:589.70px;top:670.00px;font-size:16.6px;line-height:21px;font-weight:400;color:#141414;">Review</div>
<div class="t" style="left:589.70px;top:688.75px;font-size:16.6px;line-height:21px;font-weight:400;color:#141414;">before</div>
<div class="t" style="left:589.70px;top:707.50px;font-size:16.6px;line-height:21px;font-weight:400;color:#141414;">push</div>
<div class="t" style="left:657.80px;top:670.00px;font-size:16.6px;line-height:21px;font-weight:400;color:#141414;">Internal</div>
<div class="t" style="left:657.80px;top:688.75px;font-size:16.6px;line-height:21px;font-weight:400;color:#141414;">review</div>
<div class="t" style="left:657.80px;top:707.50px;font-size:16.6px;line-height:21px;font-weight:400;color:#141414;">before push</div>
<div class="t" style="left:657.80px;top:726.25px;font-size:16.6px;line-height:21px;font-weight:400;color:#141414;">to</div>
<div class="t" style="left:657.80px;top:745.00px;font-size:16.6px;line-height:21px;font-weight:400;color:#141414;">production</div>
<div class="t" style="left:765.00px;top:670.00px;font-size:16.6px;line-height:21px;font-weight:400;color:#141414;">alexsmith@content-</div>
<div class="t" style="left:765.00px;top:688.75px;font-size:16.6px;line-height:21px;font-weight:400;color:#141414;">mobbin.com</div>
<div class="t" style="left:931.00px;top:670.00px;font-size:16.6px;line-height:21px;font-weight:400;color:#141414;">Blocked</div>
<div class="t" style="left:1005.40px;top:670.00px;font-size:16.6px;line-height:21px;font-weight:400;color:#141414;">Medium</div>
<div class="t" style="left:1080.00px;top:670.00px;font-size:16.6px;line-height:21px;font-weight:400;color:#141414;">14/10/2024</div>
<div class="t" style="left:1179.00px;top:670.00px;font-size:16.6px;line-height:21px;font-weight:400;color:#141414;">1/1/2025</div>
<div class="t" style="left:1179.00px;top:688.75px;font-size:16.6px;line-height:21px;font-weight:400;color:#141414;">1:00am</div>
<svg style="position:absolute;left:1268px;top:673px;" width="38" height="47" viewBox="0 0 38 47" fill="none"><rect x="0" y="0" width="38" height="47" fill="#fbfbfb"/><rect x="2" y="3.0" width="30" height="1" fill="#999"/><rect x="4" y="5.7" width="19" height="1" fill="#ccc"/><rect x="6" y="8.4" width="22" height="1" fill="#ccc"/><rect x="3" y="11.1" width="25" height="1" fill="#ccc"/><rect x="5" y="13.8" width="28" height="1" fill="#999"/><rect x="2" y="16.5" width="17" height="1" fill="#ccc"/><rect x="4" y="19.2" width="20" height="1" fill="#ccc"/><rect x="6" y="21.9" width="23" height="1" fill="#ccc"/><rect x="3" y="24.6" width="26" height="1" fill="#999"/><rect x="5" y="27.3" width="29" height="1" fill="#ccc"/><rect x="2" y="30.0" width="18" height="1" fill="#ccc"/><rect x="4" y="32.7" width="21" height="1" fill="#ccc"/><rect x="6" y="35.4" width="24" height="1" fill="#999"/><rect x="3" y="38.1" width="27" height="1" fill="#ccc"/><rect x="5" y="40.8" width="30" height="1" fill="#ccc"/><rect x="2" y="43.5" width="19" height="1" fill="#ccc"/></svg>
<div style="position:absolute;left:568.75px;top:833.5px;width:24.5px;height:15.5px;background:#138a1e;border-radius:8px"></div>
<div style="position:absolute;left:579.5px;top:835.5px;width:11.5px;height:11.5px;background:#fff;border-radius:50%"></div>
<div class="t" style="left:604.00px;top:830.90px;font-size:17.1px;line-height:21px;font-weight:400;color:#1b1b1b;">Use grid layout</div>
<div style="position:absolute;left:568.75px;top:868.5px;width:24.5px;height:15.5px;background:#138a1e;border-radius:8px"></div>
<div style="position:absolute;left:579.5px;top:870.5px;width:11.5px;height:11.5px;background:#fff;border-radius:50%"></div>
<div class="t" style="left:604.00px;top:865.90px;font-size:17.1px;line-height:21px;font-weight:400;color:#1b1b1b;">Send a copy to myself</div>
<div class="t" style="left:1197.80px;top:911.00px;font-size:16.6px;line-height:21px;font-weight:400;color:#555;">Cancel</div>
<div style="position:absolute;left:1271px;top:898.6px;width:80px;height:44.5px;background:#1a6fe0;border-radius:6px"></div>
<div class="t" style="left:1291.00px;top:911.00px;font-size:16.3px;line-height:20px;font-weight:700;color:#fff;">Send</div>
</body></html>
